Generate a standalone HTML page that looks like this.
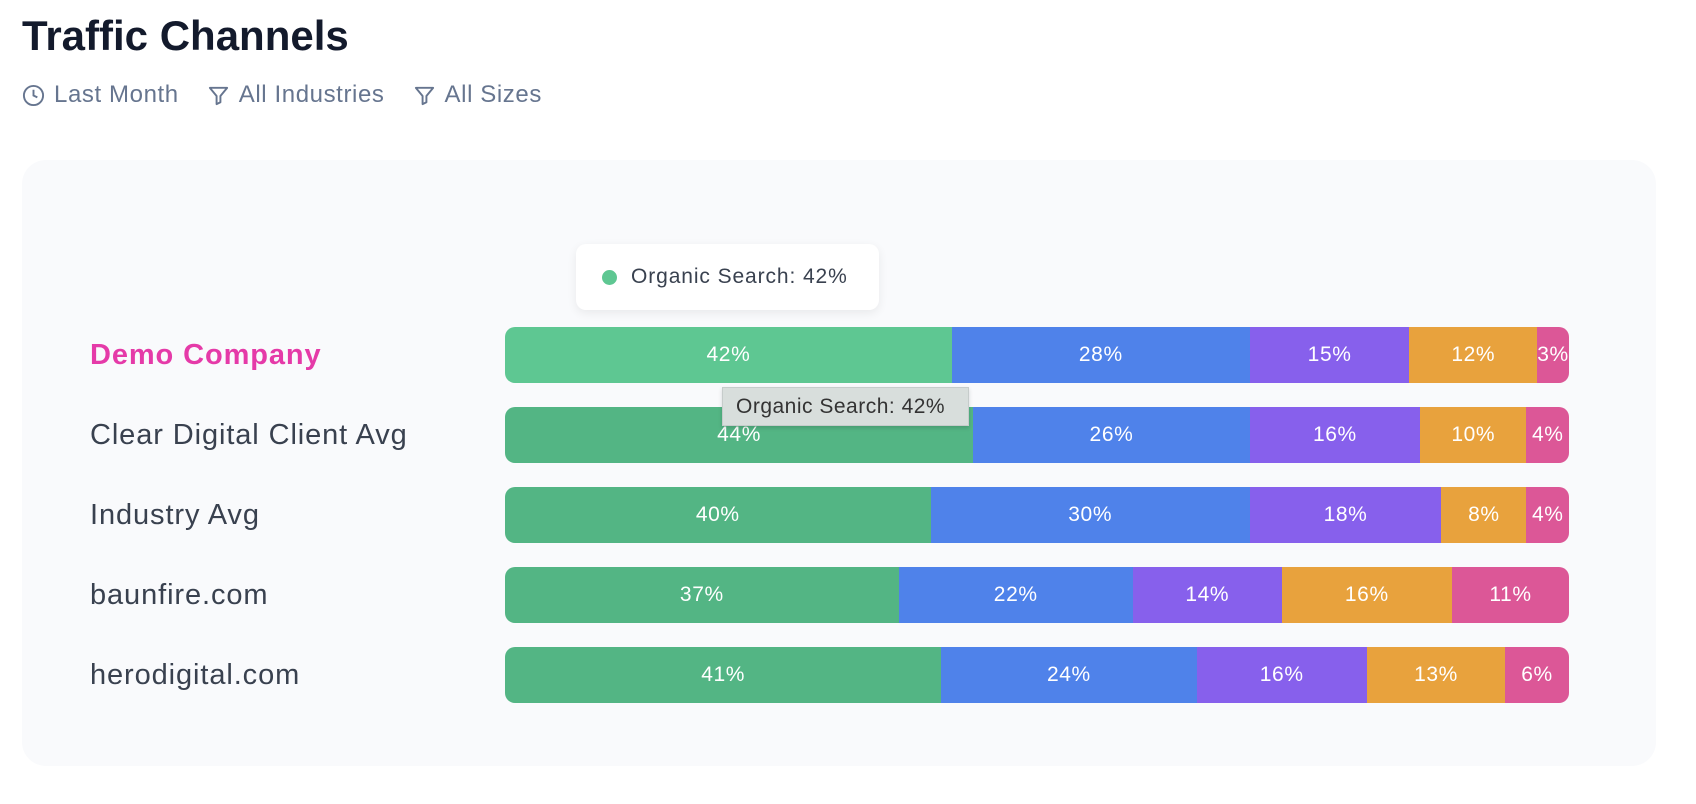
<!DOCTYPE html>
<html><head><meta charset="utf-8"><style>
*{margin:0;padding:0;box-sizing:border-box}
body{width:1696px;height:804px;background:#fff;font-family:"Liberation Sans",sans-serif;position:relative;overflow:hidden}
h1{position:absolute;left:22px;top:12px;font-size:42px;font-weight:bold;color:#131a2c;letter-spacing:0px}
.filters{position:absolute;left:22px;top:81px;display:flex;gap:28px;color:#66758f;font-size:24px;letter-spacing:0.6px;align-items:center}
.filters span{display:flex;align-items:center;gap:9px}
.card{position:absolute;left:22px;top:160px;width:1634px;height:606px;background:#f9fafc;border-radius:24px}
.row{position:absolute;left:0;width:1696px;height:56px}
.label{position:absolute;left:90px;top:0;line-height:56px;font-size:29px;letter-spacing:0.9px;color:#39414f}
.bar{position:absolute;left:505px;width:1064px;height:56px;display:flex;border-radius:10px;overflow:hidden}
.bar div{display:flex;align-items:center;justify-content:center;color:#fff;font-size:21px;letter-spacing:0.6px}
.g{background:#53b584}.b{background:#4f82ea}.p{background:#8760ec}.o{background:#e8a23d}.k{background:#dc5797}
.tip{position:absolute;left:576px;top:244px;width:303px;height:66px;background:#fff;border-radius:10px;box-shadow:0 3px 10px rgba(0,0,0,.07);display:flex;align-items:center;padding-left:26px;font-size:21px;letter-spacing:0.9px;color:#39414f}
.tip i{width:15px;height:15px;border-radius:50%;background:#5ec792;margin-right:14px}
.nt{position:absolute;left:722px;top:387px;width:247px;height:39px;background:#d8dedc;border:1px solid #c6cccb;font-size:21px;letter-spacing:0.5px;color:#333;line-height:37px;padding-left:13px;box-shadow:0 2px 4px rgba(0,0,0,.15)}
</style></head><body>
<h1>Traffic Channels</h1>
<div class="filters">
<span><svg width="23" height="23" viewBox="0 0 24 24" fill="none" stroke="#66758f" stroke-width="2"><circle cx="12" cy="12" r="10"/><path d="M12 6v6l4 2"/></svg>Last Month</span>
<span><svg width="23" height="23" viewBox="0 0 24 24" fill="none" stroke="#66758f" stroke-width="2" stroke-linejoin="round"><path d="M3 4h18l-7 8.5V19l-4 2v-8.5z"/></svg>All Industries</span>
<span><svg width="23" height="23" viewBox="0 0 24 24" fill="none" stroke="#66758f" stroke-width="2" stroke-linejoin="round"><path d="M3 4h18l-7 8.5V19l-4 2v-8.5z"/></svg>All Sizes</span>
</div>
<div class="card"></div>
<div class="tip"><i></i>Organic Search: 42%</div>
<div class="row" style="top:327px"><div class="label" style="color:#e53aa8;font-weight:bold">Demo Company</div>
<div class="bar"><div class="g" style="flex:42;background:#5ec792">42%</div><div class="b" style="flex:28">28%</div><div class="p" style="flex:15">15%</div><div class="o" style="flex:12">12%</div><div class="k" style="flex:3">3%</div></div></div>
<div class="row" style="top:407px"><div class="label">Clear Digital Client Avg</div>
<div class="bar"><div class="g" style="flex:44">44%</div><div class="b" style="flex:26">26%</div><div class="p" style="flex:16">16%</div><div class="o" style="flex:10">10%</div><div class="k" style="flex:4">4%</div></div></div>
<div class="row" style="top:487px"><div class="label">Industry Avg</div>
<div class="bar"><div class="g" style="flex:40">40%</div><div class="b" style="flex:30">30%</div><div class="p" style="flex:18">18%</div><div class="o" style="flex:8">8%</div><div class="k" style="flex:4">4%</div></div></div>
<div class="row" style="top:567px"><div class="label">baunfire.com</div>
<div class="bar"><div class="g" style="flex:37">37%</div><div class="b" style="flex:22">22%</div><div class="p" style="flex:14">14%</div><div class="o" style="flex:16">16%</div><div class="k" style="flex:11">11%</div></div></div>
<div class="row" style="top:647px"><div class="label">herodigital.com</div>
<div class="bar"><div class="g" style="flex:41">41%</div><div class="b" style="flex:24">24%</div><div class="p" style="flex:16">16%</div><div class="o" style="flex:13">13%</div><div class="k" style="flex:6">6%</div></div></div>
<div class="nt">Organic Search: 42%</div>
</body></html>
